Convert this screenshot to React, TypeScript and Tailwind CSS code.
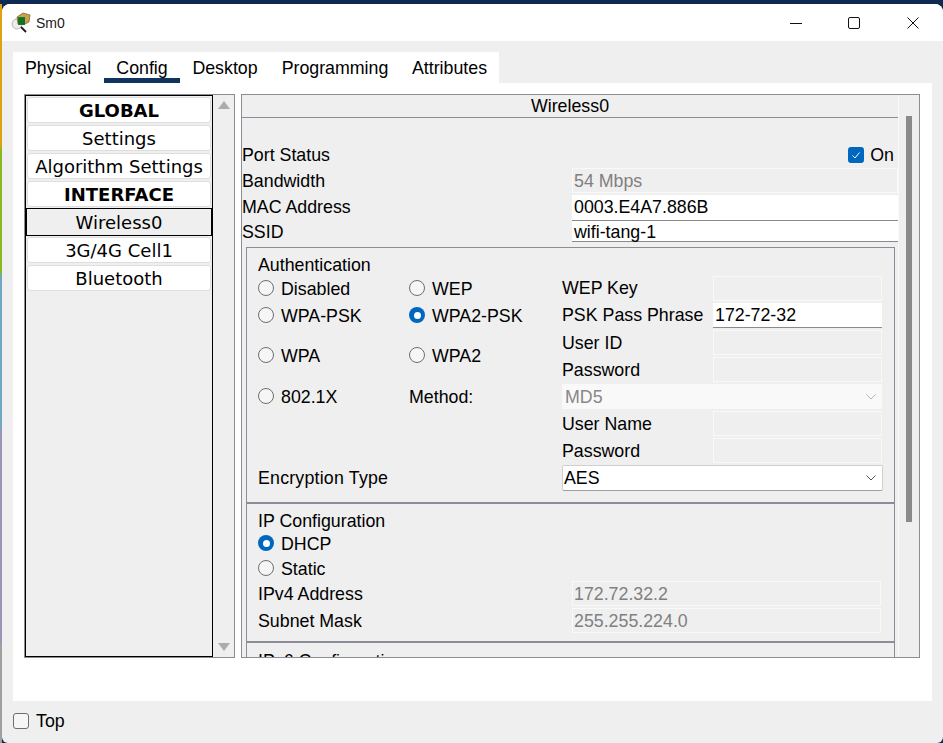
import React from 'react';

const sidebarItems = [
  { label: 'GLOBAL', bold: true },
  { label: 'Settings' },
  { label: 'Algorithm Settings' },
  { label: 'INTERFACE', bold: true },
  { label: 'Wireless0', selected: true },
  { label: '3G/4G Cell1' },
  { label: 'Bluetooth' },
];

const tabs = ['Physical', 'Config', 'Desktop', 'Programming', 'Attributes'];

function Radio({ checked, label, className = '' }: { checked?: boolean; label: string; className?: string }) {
  return (
    <div className={`flex items-center gap-[7px] ${className}`}>
      {checked ? (
        <span className="flex h-4 w-4 items-center justify-center rounded-full bg-[#0067c0]">
          <span className="h-[7px] w-[7px] rounded-full bg-white" />
        </span>
      ) : (
        <span className="h-4 w-4 rounded-full border border-[#6e6e6e] bg-[#f6f6f6]" />
      )}
      <span className="pt-[2px]">{label}</span>
    </div>
  );
}

function Field({ value, disabled, className = '' }: { value?: string; disabled?: boolean; className?: string }) {
  return (
    <div
      className={
        disabled
          ? `flex items-center border border-[#f9f9f9] bg-[#efefef] pl-[1px] text-[#808080] ${className}`
          : `flex items-center border-b border-[#8a8a8a] bg-white pl-[2px] text-black ${className}`
      }
    >
      {value}
    </div>
  );
}

function Chevron({ color }: { color: string }) {
  return (
    <svg width="10" height="6" viewBox="0 0 10 6" fill="none" stroke={color} strokeWidth="1">
      <path d="M0.5 0.5 L5 5 L9.5 0.5" />
    </svg>
  );
}

function AppIcon() {
  return (
    <svg width="20" height="21" viewBox="0 0 20 21">
      <circle cx="6" cy="12" r="5" fill="#ececec" stroke="#a8a8a8" strokeWidth="0.8" />
      <path d="M6 5 L12 1 L19 3 L18 10 L14 12 L7 12 Z" fill="#c9a24e" stroke="#6f5a22" strokeWidth="0.7" />
      <rect x="7" y="5" width="7" height="8" fill="#1d8a2e" />
      <path d="M9 5v8M11 5v8M13 5v8M7 7h7M7 9h7M7 11h7" stroke="#0f4f19" strokeWidth="0.5" />
      <path d="M10 15 L15 20" stroke="#1a1a1a" strokeWidth="1.8" />
    </svg>
  );
}

export default function App() {
  return (
    <div className="flex h-[743px] w-[943px] flex-col overflow-hidden bg-[#0e2a52] font-['Liberation_Sans',Arial,sans-serif] text-[17.8px] leading-[22px] text-black">
      <div className="h-[4px] shrink-0" />
      <div className="flex min-h-0 flex-1">
        {/* desktop wallpaper peeking out on the left */}
        <div className="w-[2px] shrink-0 bg-[linear-gradient(to_bottom,#dfa012_0%,#dfa012_19%,#8ab820_20%,#8ab820_36%,#6fa8c0_37%,#6fa8c0_57%,#9a94b8_58%,#9a94b8_86%,#a0a0a0_87%)]" />
        <div className="flex flex-1 flex-col overflow-hidden rounded-t-lg rounded-b-md bg-[#efefef]">
          {/* title bar */}
          <div className="flex h-[37px] shrink-0 items-center bg-white pl-[9px]">
            <AppIcon />
            <span className="ml-[5px] text-[14px] text-[#1a1a1a]">Sm0</span>
            <div className="ml-auto flex items-center">
              <svg width="12" height="12" viewBox="0 0 12 12" stroke="#111" strokeWidth="1" fill="none" className="mr-[46px]">
                <path d="M0 6.5 H12" />
              </svg>
              <svg width="12" height="12" viewBox="0 0 12 12" stroke="#111" strokeWidth="1" fill="none" className="mr-[47px]">
                <rect x="0.5" y="0.5" width="11" height="11" rx="1.5" />
              </svg>
              <svg width="12" height="12" viewBox="0 0 12 12" stroke="#111" strokeWidth="1" fill="none" className="mr-[24px]">
                <path d="M0.5 0.5 L11.5 11.5 M11.5 0.5 L0.5 11.5" />
              </svg>
            </div>
          </div>

          <div className="flex flex-1 flex-col pl-[11px] pr-[11px] pt-[11px]">
            {/* tabs */}
            <div className="flex h-[31px] w-[486px] shrink-0 bg-white">
              {tabs.map(tab => (
                <div
                  key={tab}
                  className={
                    tab === 'Config'
                      ? 'flex h-[31px] w-[76px] items-center justify-center border-b-[5px] border-[#0f3460] pt-[5px]'
                      : tab === 'Physical'
                        ? 'flex h-[31px] w-[91px] items-center justify-center pr-[1px]'
                        : tab === 'Desktop'
                          ? 'flex h-[31px] w-[90px] items-center justify-center'
                          : tab === 'Programming'
                            ? 'flex h-[31px] w-[130px] items-center justify-center'
                            : 'flex h-[31px] w-[99px] items-center justify-center'
                  }
                >
                  {tab}
                </div>
              ))}
            </div>

            {/* main panel */}
            <div className="flex h-[618px] shrink-0 gap-[6px] bg-white pl-[11px] pr-[12px] pt-[11px]">
              {/* sidebar */}
              <div className="flex h-[564px] w-[211px] shrink-0 border border-[#8a8d96] bg-[#efefef]">
                <div className="flex h-[562px] w-[188px] shrink-0 flex-col border border-black bg-[#efefef] px-[1px] pt-[1px] font-['DejaVu_Sans',Verdana,sans-serif] text-[18px]">
                  {sidebarItems.map(item => (
                    <div
                      key={item.label}
                      className={
                        item.selected
                          ? '-mx-[1px] -mt-[1px] mb-[1px] flex h-[28px] items-center justify-center border border-black bg-[#efefef] pt-[2px]'
                          : `mb-[2px] flex h-[26px] items-center justify-center rounded-[3px] border border-[#dedede] bg-white pt-[2px] ${item.bold ? 'font-bold' : ''}`
                      }
                    >
                      {item.label}
                    </div>
                  ))}
                </div>
                <div className="flex flex-1 flex-col items-center justify-between py-[6px]">
                  <svg width="12" height="8" viewBox="0 0 12 8" fill="#ababab"><path d="M6 0 L12 8 H0 Z" /></svg>
                  <svg width="12" height="8" viewBox="0 0 12 8" fill="#ababab"><path d="M6 8 L12 0 H0 Z" /></svg>
                </div>
              </div>

              {/* detail pane */}
              <div className="flex h-[564px] w-[679px] shrink-0 border border-[#8a8d96] bg-[#efefef]">
                <div className="flex w-[657px] shrink-0 flex-col overflow-hidden border-r border-[#f9f9f9]">
                  <div className="h-[23px] shrink-0 border-b border-[#8a8d96] text-center">Wireless0</div>

                  <div className="flex h-[24px] shrink-0" />
                  <div className="flex h-[26px] shrink-0 items-center justify-between pb-[1px] pr-[4px]">
                    <span>Port Status</span>
                    <div className="flex items-center gap-[6px]">
                      <span className="flex h-4 w-4 items-center justify-center rounded-[3px] bg-[#0067c0]">
                        <svg width="10" height="10" viewBox="0 0 10 10" fill="none" stroke="#fff" strokeWidth="1">
                          <path d="M1.5 5.5 L4 8 L8.5 2.5" />
                        </svg>
                      </span>
                      <span>On</span>
                    </div>
                  </div>
                  <div className="flex h-[25px] shrink-0 items-center">
                    <span className="w-[330px] shrink-0">Bandwidth</span>
                    <Field value="54 Mbps" disabled className="h-[25px] w-[326px] pl-[1px]" />
                  </div>
                  <div className="mt-[2px] flex h-[26px] shrink-0 items-center">
                    <span className="w-[330px] shrink-0 pb-[2px]">MAC Address</span>
                    <Field value="0003.E4A7.886B" className="h-[26px] w-[326px] pb-[1px]" />
                  </div>
                  <div className="flex h-[21px] shrink-0 items-center">
                    <span className="w-[330px] shrink-0">SSID</span>
                    <Field value="wifi-tang-1" className="h-[21px] w-[326px] pt-[2px]" />
                  </div>

                  {/* authentication */}
                  <div className="mx-[4px] mt-[5px] flex h-[256px] w-[649px] shrink-0 flex-col border border-[#8a8d96] pl-[11px]">
                    <div className="flex h-[28px] shrink-0 items-center pt-[6px]">Authentication</div>
                    <div className="flex min-h-0 flex-1">
                      <div className="-mt-[1px] flex w-[304px] shrink-0 flex-col">
                        <div className="flex h-[26px] items-center">
                          <Radio label="Disabled" className="w-[151px]" />
                          <Radio label="WEP" />
                        </div>
                        <div className="mt-[1px] flex h-[26px] items-center">
                          <Radio label="WPA-PSK" className="w-[151px]" />
                          <Radio label="WPA2-PSK" checked />
                        </div>
                        <div className="mt-[14px] flex h-[26px] items-center">
                          <Radio label="WPA" className="w-[151px]" />
                          <Radio label="WPA2" />
                        </div>
                        <div className="mt-[15px] flex h-[26px] items-center">
                          <Radio label="802.1X" className="w-[151px]" />
                          <span className="pt-[2px]">Method:</span>
                        </div>
                        <div className="mt-[56px] flex h-[26px] items-center tracking-[0.2px]">Encryption Type</div>
                      </div>
                      <div className="flex w-[321px] shrink-0 flex-col gap-[2px]">
                        {[
                          { label: 'WEP Key', shift: 'pb-[2px]' },
                          { label: 'PSK Pass Phrase', value: '172-72-32', shift: 'pb-[2px]' },
                          { label: 'User ID', shift: '' },
                          { label: 'Password', shift: '' },
                        ].map(row => (
                          <div key={row.label} className="flex h-[25px] shrink-0 items-center">
                            <span className={`w-[151px] shrink-0 whitespace-nowrap ${row.shift}`}>{row.label}</span>
                            <Field value={row.value} disabled={!row.value} className="h-[25px] w-[169px]" />
                          </div>
                        ))}
                        <div className="flex h-[25px] w-[320px] shrink-0 items-center justify-between bg-[#f9f9f9] pl-[3px] pr-[6px] text-[#888888]">
                          MD5
                          <Chevron color="#b5b5b5" />
                        </div>
                        {['User Name', 'Password'].map(label => (
                          <div key={label} className="flex h-[25px] shrink-0 items-center">
                            <span className="w-[151px] shrink-0">{label}</span>
                            <Field disabled className="h-[25px] w-[169px]" />
                          </div>
                        ))}
                        <div className="flex h-[26px] w-[321px] shrink-0 items-center justify-between rounded-[2px] border border-[#d0d0d0] border-b-[#a0a0a0] bg-white pl-[1px] pr-[6px]">
                          AES
                          <Chevron color="#555555" />
                        </div>
                      </div>
                    </div>
                  </div>

                  {/* ip configuration */}
                  <div className="mx-[4px] flex h-[139px] w-[649px] shrink-0 flex-col border border-[#8a8d96] pl-[11px]">
                    <div className="flex h-[28px] shrink-0 items-center pt-[5px]">IP Configuration</div>
                    <Radio label="DHCP" checked className="h-[22px] shrink-0" />
                    <Radio label="Static" className="mt-[2px] h-[24px] shrink-0" />
                    <div className="mt-[1px] flex h-[25px] shrink-0 items-center">
                      <span className="w-[314px] shrink-0">IPv4 Address</span>
                      <Field value="172.72.32.2" disabled className="h-[25px] w-[309px]" />
                    </div>
                    <div className="mt-[2px] flex h-[25px] shrink-0 items-center">
                      <span className="w-[314px] shrink-0">Subnet Mask</span>
                      <Field value="255.255.224.0" disabled className="h-[25px] w-[309px]" />
                    </div>
                  </div>

                  <div className="mx-[4px] h-[40px] w-[649px] shrink-0 border-x border-t border-[#8a8d96] pl-[11px] pt-[7px]">IPv6 Configuration</div>
                </div>

                {/* scrollbar */}
                <div className="flex flex-1 justify-center pt-[21px]">
                  <div className="h-[406px] w-[6px] bg-[#8a8a8a]" />
                </div>
              </div>
            </div>

            {/* footer */}
            <div className="flex flex-1 items-center gap-[7px] pb-[2px]">
              <span className="h-4 w-4 rounded-[3px] border border-[#6e6e6e] bg-[#f6f6f6]" />
              Top
            </div>
          </div>
        </div>
      </div>
    </div>
  );
}
